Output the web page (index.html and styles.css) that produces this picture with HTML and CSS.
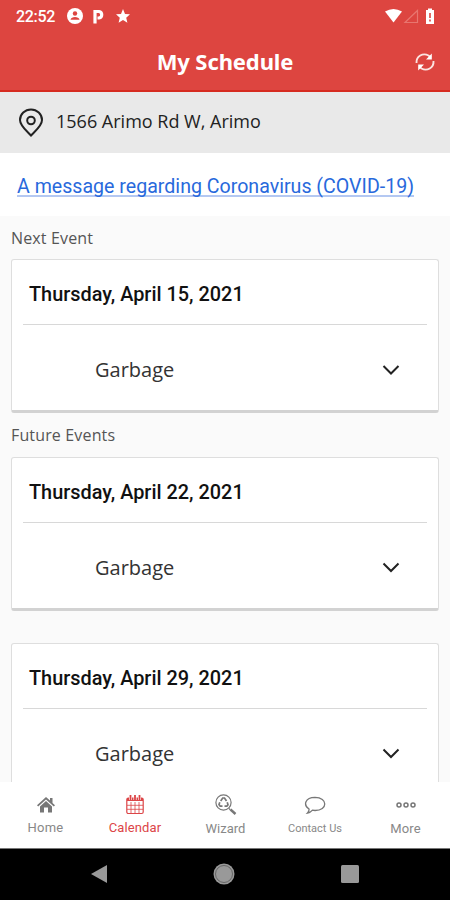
FILE: index.html
```html
<!DOCTYPE html>
<html lang="en">
<head>
<meta charset="utf-8">
<title>My Schedule</title>
<link rel="stylesheet" href="styles.css">
</head>
<body>
<div class="screen">
  <header class="header">
    <div class="status">
      <span class="time">22:52</span>
      <svg class="st-user" width="16" height="16" viewBox="0 0 16 16"><circle cx="8" cy="8" r="8" fill="#fff"/><circle cx="8" cy="5.500" r="2.200" fill="#dd4540"/><path d="M3.500 11.800C4 8 12 8 12.500 11.800Z" fill="#dd4540"/></svg>
      <svg class="st-p" width="12" height="15" viewBox="0 0 12 15"><path d="M2 14.500V2.500H6A3.300 3.300 0 0 1 6 9H4.500" fill="none" stroke="#fff" stroke-width="3.200"/></svg>
      <svg class="st-star" width="14" height="14" viewBox="0 0 14 14"><path d="M7 0l2 4.900 5 .4-3.800 3.400 1.200 5.100L7 11.100l-4.400 2.700 1.200-5.100L0 5.300l5-.4z" fill="#fff"/></svg>
      <svg class="st-right" width="52" height="17" viewBox="0 0 52 17"><path d="M1 3.500Q9.500-1.500 18 3.500L9.500 14.500Z" fill="#fff"/><path d="M33.500 2.500V14.500H21Z" fill="none" stroke="#e8766f" stroke-width="1.200"/><path d="M42 2h2V.500h4V2h2v14h-8z" fill="#fff"/><path d="M46 5v5M46 11.500v2" stroke="#dd4540" stroke-width="1.600"/></svg>
    </div>
    <div class="titlebar">
      <h1>My Schedule</h1>
      <svg class="refresh" width="20" height="20" viewBox="0 0 20 20" fill="none" stroke="#fbe3e0" stroke-width="1.900"><path d="M1.500 11C1 4 8 .500 13.500 3.500L16 5.500M18.500 9C19 16 12 19.500 6.500 16.500L4 14.500"/><path d="M16.800 1.500v6H11zM3.200 18.500v-6H9z" fill="#fff" stroke="none"/></svg>
    </div>
  </header>
  <div class="address">
    <svg width="26" height="30" viewBox="0 0 26 30" fill="none" stroke="#222" stroke-width="2"><path d="M13 27.500C9 23 2 18 2 12A11 10.500 0 0 1 24 12C24 18 17 23 13 27.500Z"/><circle cx="13" cy="12.500" r="3.800"/></svg>
    <span>1566 Arimo Rd W, Arimo</span>
  </div>
  <div class="message"><a>A message regarding Coronavirus (COVID-19)</a></div>
  <main class="events">
    <h2>Next Event</h2>
    <section class="card">
      <h3>Thursday, April 15, 2021</h3>
      <div class="row"><span>Garbage</span><svg width="18" height="12" viewBox="0 0 18 12"><path d="M1.500 2L9 9.500l7.500-7.500" fill="none" stroke="#222" stroke-width="2"/></svg></div>
    </section>
    <h2 class="future">Future Events</h2>
    <section class="card">
      <h3>Thursday, April 22, 2021</h3>
      <div class="row"><span>Garbage</span><svg width="18" height="12" viewBox="0 0 18 12"><path d="M1.500 1.500L9 9l7.500-7.500" fill="none" stroke="#222" stroke-width="2"/></svg></div>
    </section>
    <section class="card later">
      <h3>Thursday, April 29, 2021</h3>
      <div class="row"><span>Garbage</span><svg width="18" height="12" viewBox="0 0 18 12"><path d="M1.500 1.500L9 9l7.500-7.500" fill="none" stroke="#222" stroke-width="2"/></svg></div>
    </section>
  </main>
  <nav class="tabs">
    <div class="tab home">
      <svg width="18" height="16" viewBox="0 0 18 16" fill="#777"><path d="M9 0L0 8.200l1.200 1.300L9 2.600l7.800 6.900L18 8.200l-2.500-2.300V1H13v2.600z"/><path d="M9 4L3 9.500V15.500H7V10.500h4v5h4v-6z"/></svg>
      <span>Home</span>
    </div>
    <div class="tab calendar">
      <svg width="18" height="20" viewBox="0 0 18 20" fill="none" stroke="#dc4547"><rect x=".8" y="3" width="16.400" height="15.500" rx="1.500" stroke-width="1.200"/><path d="M1 3h16v3H1z" fill="#dc4547" stroke="none"/><path d="M4.500 0v5M9 0v5M13.500 0v5" stroke="#fff" stroke-width="3"/><path d="M4.500 0v5M9 0v5M13.500 0v5" stroke-width="1.800"/><path d="M1 10.300h16M1 14.300h16M5 7v11M9 7v11M13 7v11" stroke-width=".8"/></svg>
      <span>Calendar</span>
    </div>
    <div class="tab wizard">
      <svg width="22" height="21" viewBox="0 0 22 21" fill="none" stroke="#777"><circle cx="8.500" cy="8.500" r="7.600" stroke-width="1.200"/><path d="M5.700 7l2-3h1.800l2 3M12.200 8.200l.8 2.500-1.200 1.500H9.500M7.500 12.200H5.200L4 10.500l.8-2.300" stroke-width="1.700"/><path d="M14 14.500l1.300 1.200" stroke-width="1.200"/><path d="M15.500 15.500l5 4.500" stroke-width="2.400"/></svg>
      <span>Wizard</span>
    </div>
    <div class="tab contact">
      <svg width="22" height="19" viewBox="0 0 22 19" fill="none" stroke="#777" stroke-width="1.300"><path d="M5 13C-1 9 1 1.500 11 1.300C24 1.500 24 14.500 11 14.500L8.500 14.200C7 16 5.500 16.700 3.500 17C4.500 16 5.200 14.500 5 13Z"/></svg>
      <span>Contact Us</span>
    </div>
    <div class="tab more">
      <svg width="20" height="8" viewBox="0 0 20 8" fill="none" stroke="#777" stroke-width="1.500"><circle cx="3" cy="4" r="2"/><circle cx="10" cy="4" r="2"/><circle cx="17" cy="4" r="2"/></svg>
      <span>More</span>
    </div>
  </nav>
  <footer class="system">
    <svg width="16" height="18" viewBox="0 0 16 18"><path d="M0 9L16 0v18z" fill="#999"/></svg>
    <svg width="22" height="22" viewBox="0 0 22 22"><circle cx="11" cy="11" r="10.500" fill="#999"/><circle cx="11" cy="11" r="8.500" fill="none" stroke="#666" stroke-width="1"/></svg>
    <svg width="18" height="18" viewBox="0 0 18 18"><rect width="18" height="18" rx="1.500" fill="#999"/></svg>
  </footer>
</div>
</body>
</html>
```
FILE: styles.css
```css
* { box-sizing: border-box; }
body { margin: 0; }
h1, h2, h3 { margin: 0; }
svg { display: block; flex: none; }
span, a, h1, h2, h3 { white-space: nowrap; }
.screen { width: 450px; height: 900px; overflow: hidden; display: flex; flex-direction: column; background: #fafafa; font-family: "Open Sans", "Noto Sans", sans-serif; }
.header { height: 92px; flex: none; background: #dd4540; border-bottom: 2px solid #d62b20; color: #fff; }
.status { height: 32px; display: flex; align-items: center; padding: 0 14px 0 16px; }
.time { font: 500 16px/20px Roboto, sans-serif; width: 51px; padding-top: 1px; letter-spacing: -.3px; }
.st-p { margin-left: 10px; }
.st-star { margin-left: 11px; }
.st-right { margin-left: auto; }
.titlebar { height: 60px; display: grid; grid-template-columns: 1fr auto 1fr; align-items: center; padding: 0 15px 1px; }
.titlebar h1 { grid-column: 2; font-family: "Noto Sans", sans-serif; font-size: 22px; line-height: 30px; font-weight: 700; letter-spacing: -.1px; padding-bottom: 2px; }
.refresh { justify-self: end; }
.address { height: 61px; flex: none; background: #e9e9e9; display: flex; align-items: center; gap: 12px; padding: 0 18px; color: #222; font-size: 18px; }
.address span { padding-bottom: 4px; }
.message { height: 63px; flex: none; background: #fff; padding: 21px 17px; font: 19.600px/26px Roboto, sans-serif; color: #2869dc; }
.message a { text-decoration: underline; text-decoration-color: #b4c8f2; text-decoration-thickness: 2px; text-underline-offset: 2px; text-decoration-skip-ink: none; }
.events { flex: 1; min-height: 0; overflow: hidden; padding: 0 11px; }
.events h2 { height: 43px; line-height: 45px; font-size: 16px; font-weight: 400; letter-spacing: .15px; color: #555; }
.events h2.future { height: 44px; line-height: 45px; }
.card { height: 154px; background: #fff; border: 1px solid #dedede; border-bottom: 3px solid #d2d2d2; border-radius: 3px; padding: 0 11px; }
.card.later { margin-top: 32px; }
.card h3 { height: 65px; border-bottom: 1px solid #d8d8d8; padding-left: 6px; font: 500 19.900px/69px Roboto, sans-serif; color: #111; }
.row { height: 84px; display: flex; align-items: center; justify-content: space-between; padding: 6px 27px 0 72px; font-size: 20px; color: #333; }
.row span { padding-bottom: 2px; }
.tabs { height: 66px; flex: none; background: #fff; display: grid; grid-template-columns: repeat(5, 1fr); color: #888; font: 13px/16px Roboto, sans-serif; }
.tab { display: flex; flex-direction: column; align-items: center; justify-content: space-between; padding: 12px 0 11px 1px; }
.home { padding-top: 15px; padding-bottom: 12px; letter-spacing: .2px; }
.calendar { color: #dc4547; padding-top: 13px; padding-bottom: 12px; padding-left: 0; letter-spacing: .1px; }
.contact { font-size: 11px; padding-top: 14px; padding-left: 0; }
.more { padding-top: 19px; letter-spacing: .2px; }
.system { height: 52px; flex: none; background: #000; border-top: 1px solid #777; display: flex; align-items: center; justify-content: space-between; padding: 0 91px 2px; }
```
